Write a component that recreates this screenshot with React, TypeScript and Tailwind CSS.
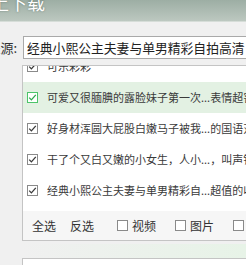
import React from "react";

const Check = ({ green }: { green?: boolean }) => (
  <div
    className={
      "w-[11px] h-[11px] shrink-0 flex items-center justify-center bg-white border " +
      (green ? "border-[#4cc46a]" : "border-[#8a8a8a]")
    }
  >
    <svg width="9" height="9" viewBox="0 0 9 9">
      <polyline
        points="1.2,4.6 3.4,6.9 7.8,1.8"
        fill="none"
        stroke={green ? "#2fa84f" : "#3a3a3a"}
        strokeWidth="1.3"
      />
    </svg>
  </div>
);

const Box = () => (
  <div className="w-[11px] h-[11px] shrink-0 bg-white border border-[#8a8a8a]" />
);

const rows = [
  { t: "可乐彩彩", hl: false },
  { t: "可爱又很腼腆的露脸妹子第一次...表情超害羞", hl: true },
  { t: "好身材浑圆大屁股白嫩马子被我...的国语对白", hl: false },
  { t: "干了个又白又嫩的小女生，人小...，叫声销魂", hl: false },
  { t: "经典小熙公主夫妻与单男精彩自...超值的收藏", hl: false },
];

export default function App() {
  return (
    <div
      className="w-[246px] h-[265px] overflow-hidden bg-[#f0f0f0] text-[#333]"
      style={{ fontFamily: '"Noto Sans CJK SC", "Noto Sans", sans-serif' }}
    >
      <div className="h-[22px] overflow-hidden bg-gradient-to-b from-[#9daea4] to-[#bcc8c0] border-b border-[#d6ddd8]">
        <div className="ml-[-9px] mt-[-8px] text-[18px] leading-[20px] text-white whitespace-nowrap [text-shadow:0_0_2px_rgba(60,80,70,0.6)]">
          上下载
        </div>
      </div>
      <div className="mt-[14px] flex items-center h-[23px]">
        <div className="w-[23px] overflow-hidden flex justify-end pr-[6px] shrink-0">
          <span className="text-[13px] whitespace-nowrap">来源:</span>
        </div>
        <div className="w-[240px] shrink-0 h-[23px] bg-white border border-[#a9a9a9] flex items-center pl-[3px] overflow-hidden">
          <span className="text-[12.8px] whitespace-nowrap text-[#222]">
            经典小熙公主夫妻与单男精彩自拍高清
          </span>
        </div>
      </div>
      <div className="mt-[6px] ml-[22px] w-[240px] h-[176px] border border-[#c4c4c4] bg-white flex flex-col">
        <div className="h-[145px] overflow-hidden">
          <div className="mt-[-15px]">
            {rows.map((r, i) => (
              <div
                key={i}
                className={
                  "h-[31px] flex items-center pl-[4px] " +
                  (r.hl ? "bg-[#e3f1e3]" : "")
                }
              >
                <Check green={r.hl} />
                <span className="ml-[9px] text-[11px] whitespace-nowrap text-[#3a3a3a]">
                  {r.t}
                </span>
              </div>
            ))}
          </div>
        </div>
        <div className="flex-1 bg-[#f6f6f6] flex items-center text-[12px] text-[#333] whitespace-nowrap">
          <span className="ml-[9px]">全选</span>
          <span className="ml-[14px]">反选</span>
          <span className="ml-[23px]"><Box /></span>
          <span className="ml-[4px]">视频</span>
          <span className="ml-[19px]"><Box /></span>
          <span className="ml-[4px]">图片</span>
          <span className="ml-[19px]"><Box /></span>
        </div>
      </div>
      <div className="mt-[3px] ml-[22px] h-[14px] bg-gradient-to-r from-[#f0f0f0] to-[#e7f3e7]" />
      <div className="ml-[22px] w-[240px] h-[20px] border border-[#c4c4c4] bg-white" />
    </div>
  );
}
